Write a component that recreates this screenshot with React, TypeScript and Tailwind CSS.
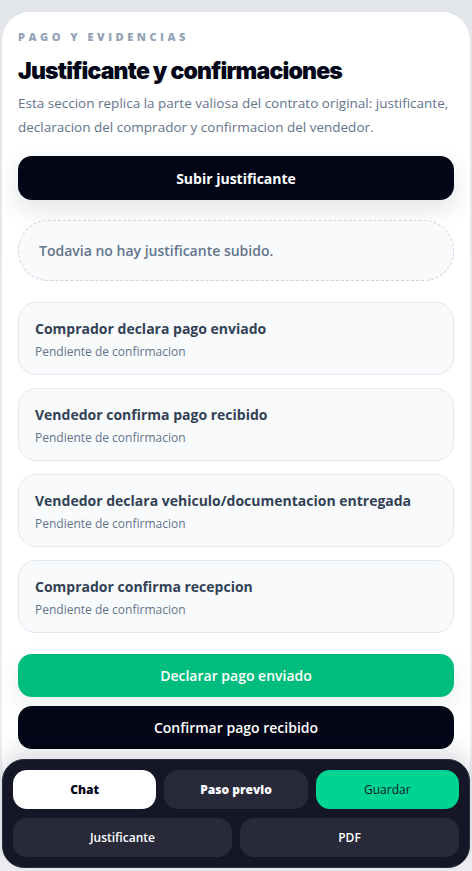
const steps = [
  "Comprador declara pago enviado",
  "Vendedor confirma pago recibido",
  "Vendedor declara vehiculo/documentacion entregada",
  "Comprador confirma recepcion",
];

function StepCard({ title }: { title: string }) {
  return (
    <div className="flex h-[73px] flex-col justify-center rounded-[18px] border border-[#e2e8f0] bg-[#f8fafc] px-4 pt-[2px]">
      <p className="text-[14px] font-bold leading-5 text-[#334155]">{title}</p>
      <p className="mt-[5px] text-[12px] leading-4 text-[#64748b]">Pendiente de confirmacion</p>
    </div>
  );
}

export default function App() {
  return (
    <div
      className="relative h-[871px] overflow-hidden bg-gradient-to-b from-[#e2e5ea] to-[#eef0f3]"
      style={{ fontFamily: '"Open Sans", "Noto Sans", sans-serif' }}
    >
      <div className="mx-[2px] mt-3 rounded-[28px] bg-white px-4 pt-[17px] pb-10">
        <p className="text-[11px] font-extrabold uppercase leading-4 tracking-[0.32em] text-[#94a3b8]">
          Pago y evidencias
        </p>
        <h1
          className="mt-[10px] text-[23px] font-black leading-8 tracking-[-0.035em] text-[#020617]"
          style={{ fontFamily: "Inter, sans-serif" }}
        >
          Justificante y confirmaciones
        </h1>
        <p className="mt-[4px] text-[13.5px] leading-6 text-[#64748b]">
          Esta seccion replica la parte valiosa del contrato original: justificante, declaracion del
          comprador y confirmacion del vendedor.
        </p>

        <button className="mt-[17px] flex h-11 w-full items-center justify-center rounded-[14px] bg-[#020617] text-[14px] font-bold text-white shadow-[0_10px_24px_rgba(15,23,42,0.12)]">
          Subir justificante
        </button>

        <div className="mt-5 flex h-[61px] items-center rounded-[30px] border border-dashed border-[#cbd5e1] bg-[#f8fafc] px-5">
          <p className="text-[14px] font-semibold text-[#64748b]">Todavia no hay justificante subido.</p>
        </div>

        <div className="mt-[21px] flex flex-col gap-[13px]">
          {steps.map((s) => (
            <StepCard key={s} title={s} />
          ))}
        </div>

        <button className="mt-[21px] flex h-[43px] w-full items-center justify-center rounded-[14px] bg-[#00bc7d] text-[14px] font-semibold text-white shadow-[0_10px_24px_rgba(15,23,42,0.08)]">
          Declarar pago enviado
        </button>
        <button className="mt-[9px] flex h-[43px] w-full items-center justify-center rounded-[14px] bg-[#020617] text-[14px] font-semibold text-white">
          Confirmar pago recibido
        </button>
      </div>

      <div className="absolute bottom-[3px] left-[2px] right-[2px] rounded-[22px] border border-[#2a2d3d] bg-[#151726] p-[10px] shadow-[0_-8px_24px_rgba(15,23,42,0.15)]">
        <div className="grid grid-cols-3 gap-2">
          <button className="h-[39px] rounded-[14px] bg-white text-[12px] font-extrabold text-[#020617]">Chat</button>
          <button className="h-[39px] rounded-[14px] bg-[#282a3a] text-[12px] font-extrabold text-white">Paso previo</button>
          <button className="h-[39px] rounded-[14px] bg-[#00d492] text-[12px] font-medium text-[#0f172a]">Guardar</button>
        </div>
        <div className="mt-[9px] grid grid-cols-2 gap-2">
          <button className="h-[39px] rounded-[14px] bg-[#282a3a] text-[12px] font-semibold text-white">Justificante</button>
          <button className="h-[39px] rounded-[14px] bg-[#282a3a] text-[12px] font-semibold text-white">PDF</button>
        </div>
      </div>
    </div>
  );
}
